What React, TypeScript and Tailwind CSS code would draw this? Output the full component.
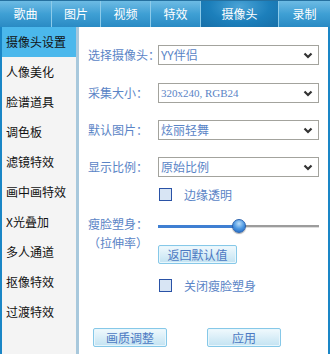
import React from "react";

const tabs = [
  { label: "歌曲", w: "w-[52px]" },
  { label: "图片", w: "w-[49px]" },
  { label: "视频", w: "w-[50px]" },
  { label: "特效", w: "w-[50px]" },
  { label: "摄像头", w: "w-[78px]", active: true },
  { label: "录制", w: "flex-1" },
];

const sideItems = [
  "摄像头设置",
  "人像美化",
  "脸谱道具",
  "调色板",
  "滤镜特效",
  "画中画特效",
  "X光叠加",
  "多人通道",
  "抠像特效",
  "过渡特效",
];

function Chevron() {
  return (
    <svg width="10" height="7" viewBox="0 0 10 7" className="shrink-0">
      <polyline points="1.5,1.5 5,5 8.5,1.5" fill="none" stroke="#333" strokeWidth="2.2" />
    </svg>
  );
}

function Select({ value, latin }: { value: string; latin?: boolean }) {
  return (
    <div className="flex h-[20px] w-[161px] items-center justify-between border border-[#a3a39d] bg-white pl-[2px] pr-[5px]">
      <span
        className={
          latin
            ? "font-['Liberation_Serif','Noto_Sans_CJK_SC',serif] text-[11px] text-[#5a84c6]"
            : "text-[12px] text-[#5a84c6]"
        }
      >
        {value}
      </span>
      <Chevron />
    </div>
  );
}

function Checkbox({ label }: { label: string }) {
  return (
    <div className="flex h-[13px] items-center">
      <div className="h-[13px] w-[13px] border-[1.5px] border-[#2a52a6] bg-[#d8e5f4]" />
      <span className="ml-[12px] text-[12px] leading-none text-[#5a84c6]">{label}</span>
    </div>
  );
}

function Button({ label, w }: { label: string; w: string }) {
  return (
    <div
      className={`flex h-[19px] ${w} items-center justify-center rounded-[2px] border border-[#86c8e8] bg-gradient-to-b from-[#f0f9fd] to-[#c3e3f2] text-[12px] leading-none text-[#4c79c2] shadow-[inset_0_0_0_1px_#e8f6fc]`}
    >
      {label}
    </div>
  );
}

function Row({ label, children }: { label: string; children: React.ReactNode }) {
  return (
    <div className="flex items-center">
      <div className="w-[70px] shrink-0 whitespace-nowrap text-[12px] leading-none text-[#5a84c6]">{label}</div>
      {children}
    </div>
  );
}

export default function App() {
  return (
    <div className="flex h-[354px] w-[330px] flex-col overflow-hidden bg-white font-['Noto_Sans_CJK_SC','Noto_Sans',sans-serif]">
      {/* top tabs */}
      <div className="flex h-[27px] shrink-0 border-t border-[#25709f] bg-gradient-to-b from-[#6cbbe4] via-[#3e9fd4] to-[#2a8bc4]">
        {tabs.map((t) => (
          <div
            key={t.label}
            className={`${t.w} flex items-center justify-center border-r border-[#8ccbea] text-[12px] text-white last:border-r-0 ${
              t.active
                ? "bg-[radial-gradient(ellipse_at_50%_20%,#4aa3d6_0%,#1c7fbb_55%,#176fa8_100%)]"
                : ""
            }`}
          >
            {t.label}
          </div>
        ))}
      </div>

      <div className="flex flex-1 border-l-2 border-r-2 border-[#1a86c6]">
        {/* sidebar */}
        <div className="flex w-[74px] shrink-0 flex-col bg-[#f4f4f4]">
          {sideItems.map((s, i) => (
            <div
              key={s}
              className={`flex h-[30px] items-center pl-[4px] text-[12px] text-[#111] ${
                i === 0 ? "bg-[#4bb8ec]" : ""
              }`}
            >
              {s}
            </div>
          ))}
        </div>
        <div className="w-[3px] shrink-0 bg-[#a8c8dc]" />

        {/* main */}
        <div className="flex flex-1 flex-col pl-[9px] pt-[18px]">
          <Row label="选择摄像头：">
            <Select value="YY伴侣" />
          </Row>
          <div className="mt-[18px]">
            <Row label="采集大小：">
              <Select value="320x240, RGB24" latin />
            </Row>
          </div>
          <div className="mt-[17px]">
            <Row label="默认图片：">
              <Select value="炫丽轻舞" />
            </Row>
          </div>
          <div className="mt-[17px]">
            <Row label="显示比例：">
              <Select value="原始比例" />
            </Row>
          </div>
          <div className="mt-[11px] pl-[71px]">
            <Checkbox label="边缘透明" />
          </div>

          <div className="mt-[15px] flex">
            <div className="w-[70px] shrink-0 text-[12px] leading-[16px] text-[#5a84c6]">
              <div>瘦脸塑身：</div>
              <div className="mt-[3px]">（拉伸率）</div>
            </div>
            <div className="flex flex-col">
              <div className="relative flex h-[20px] w-[161px] items-center">
                <div className="h-[3px] w-[80px] bg-[#3f7fd2]" />
                <div className="h-[3px] flex-1 border-b border-[#dcdcdc] bg-[#9c9c9c]" />
                <div className="absolute left-[74px] top-[3px] h-[14px] w-[14px] rounded-full border border-[#2a62ae] bg-[radial-gradient(circle_at_50%_30%,#b8dcf8_0%,#4d98e2_50%,#1d62be_100%)] shadow-[0_1px_1px_rgba(0,0,0,0.35)]" />
              </div>
              <div className="mt-[9px]">
                <Button label="返回默认值" w="w-[79px]" />
              </div>
            </div>
          </div>

          <div className="mt-[15px] pl-[71px]">
            <Checkbox label="关闭瘦脸塑身" />
          </div>

          <div className="mt-[36px] flex gap-[40px] pl-[5px]">
            <Button label="画质调整" w="w-[74px]" />
            <Button label="应用" w="w-[74px]" />
          </div>
        </div>
      </div>
    </div>
  );
}
